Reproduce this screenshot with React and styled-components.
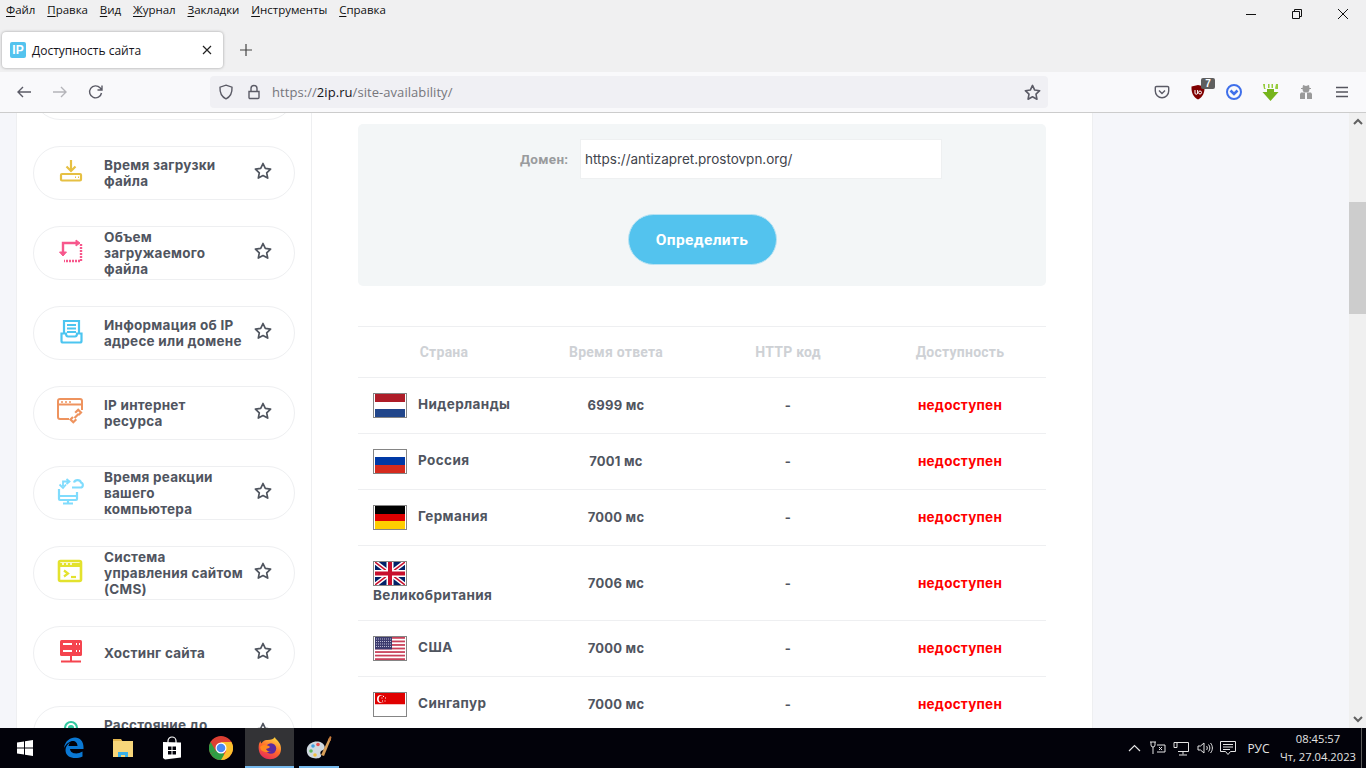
import React from 'react'
import styled, { createGlobalStyle } from 'styled-components'

const GlobalStyle = createGlobalStyle`
  html, body { margin: 0; padding: 0; height: 100%; overflow: hidden; background: #fff; }
  * { box-sizing: border-box; }
`

const Screen = styled.div`
  width: 1366px;
  height: 768px;
  display: flex;
  flex-direction: column;
  overflow: hidden;
  font-family: "Open Sans", "Liberation Sans", sans-serif;
`

/* browser chrome */
const TitleArea = styled.div`
  height: 72px;
  background: #f0f0f1;
  display: flex;
  flex-direction: column;
  position: relative;
`
const MenuBar = styled.div`
  height: 32px;
  display: flex;
  gap: 11.8px;
  padding: 1px 0 0 6px;
  font-size: 11.5px;
  line-height: 17px;
  color: #111;
`
const MenuItem = styled.span`
  & > u { text-underline-offset: 2px; }
`
const WindowButtons = styled.div`
  position: absolute;
  top: 0;
  right: 0;
  display: flex;
`
const WindowButton = styled.div`
  width: 46px;
  height: 28px;
  display: flex;
  align-items: center;
  justify-content: center;
`
const TabRow = styled.div`
  display: flex;
  align-items: center;
  padding-left: 2px;
  height: 36px;
`
const Tab = styled.div`
  width: 221px;
  height: 36px;
  background: #fff;
  border-radius: 4px;
  box-shadow: 0 0 3px rgba(0, 0, 0, 0.35);
  display: flex;
  align-items: center;
  padding: 0 11px 0 8px;
  font-size: 12px;
  color: #15141a;
`
const Favicon = styled.span`
  width: 16px;
  height: 16px;
  border-radius: 2px;
  background: #53c3ee;
  color: #fff;
  font: 700 12px/16px "Liberation Sans", sans-serif;
  text-align: center;
  margin-right: 6px;
`
const TabTitle = styled.span`
  flex: 1;
  padding-top: 1px;
`
const NewTab = styled.div`
  width: 46px;
  display: flex;
  justify-content: center;
`
const NavBar = styled.div`
  height: 41px;
  background: #f9f9fb;
  border-bottom: 1px solid #ccc;
  display: flex;
  align-items: center;
`
const NavButton = styled.div`
  width: 36px;
  height: 32px;
  display: flex;
  align-items: center;
  justify-content: center;
`
const NavLeft = styled.div`
  width: 210px;
  display: flex;
  padding-left: 6px;
`
const UrlBar = styled.div`
  width: 838px;
  height: 32px;
  background: #f0f0f4;
  border-radius: 4px;
  display: flex;
  align-items: center;
  padding: 0 2px;
`
const UrlIcon = styled.div`
  width: 28px;
  display: flex;
  justify-content: center;
`
const UrlText = styled.div`
  flex: 1;
  margin-left: 4px;
  font-size: 13px;
  letter-spacing: 0.06px;
  color: #76767c;
  & > b { font-weight: 400; color: #15141a; }
`
const NavRight = styled.div`
  flex: 1;
  display: flex;
  justify-content: flex-end;
  padding-right: 6px;
`
const Badge = styled.span`
  position: absolute;
  top: 2px;
  right: 1px;
  width: 14px;
  height: 11px;
  background: #5f5f5f;
  border-radius: 2px;
  color: #fff;
  font: 700 10px/11px "Liberation Sans", sans-serif;
  text-align: center;
`
const BadgeHolder = styled(NavButton)`
  position: relative;
`

/* page */
const Viewport = styled.div`
  height: 615px;
  display: flex;
  overflow: hidden;
`
const Page = styled.div`
  flex: 1;
  background: #f5f6fa;
  padding-left: 16px;
  overflow: hidden;
`
const Panel = styled.div`
  width: 1077px;
  height: 100%;
  background: #fff;
  border-left: 1px solid #eeeff1;
  border-right: 1px solid #eeeff1;
  display: flex;
`
const Sidebar = styled.nav`
  width: 295px;
  border-right: 1px solid #eeeff1;
  padding: 0 16px;
`
const CardList = styled.div`
  margin-top: -47px;
  display: flex;
  flex-direction: column;
  gap: 26px;
`
const SideCard = styled.a`
  flex: none;
  height: 54px;
  width: 262px;
  border: 1px solid #eeeff1;
  border-radius: 27px;
  display: flex;
  align-items: center;
  padding-left: 22px;
`
const SideIcon = styled.div`
  width: 28px;
  height: 28px;
  margin-right: 20px;
  margin-bottom: 4px;
  flex: none;
`
const SideLabel = styled.div`
  width: 141px;
  flex: none;
  font: 700 13.5px/16px Inter, "Liberation Sans", sans-serif;
  letter-spacing: 0.25px;
  color: #50555f;
  white-space: pre-line;
`
const SideStar = styled.div`
  width: 18px;
  height: 18px;
  margin-left: 9px;
  margin-bottom: 5px;
  flex: none;
`
const Content = styled.main`
  width: 780px;
  padding: 11px 46px 0;
`
const FormBox = styled.section`
  height: 162px;
  background: #f3f6f7;
  border-radius: 5px;
  display: flex;
  flex-direction: column;
  align-items: center;
  padding-top: 15px;
`
const FieldRow = styled.div`
  display: flex;
  align-items: center;
  margin-left: 58px;
`
const FieldLabel = styled.label`
  width: 60px;
  font: 700 13.5px/20px Roboto, sans-serif;
  letter-spacing: 0.3px;
  color: #999b9d;
`
const DomainInput = styled.div`
  width: 362px;
  height: 40px;
  background: #fff;
  border: 1px solid #eef0f1;
  padding: 0 4px;
  font: 400 13.5px/38px Inter, sans-serif;
  color: #3f444c;
`
const SubmitButton = styled.button`
  margin-top: 35px;
  width: 149px;
  height: 51px;
  border-radius: 26px;
  border: 1px solid #b9e3f3;
  background: #53c3ee;
  color: #fff;
  font: 700 15.5px Roboto, sans-serif;
  letter-spacing: 0.35px;
`
const Results = styled.div`
  margin-top: 40px;
  border-top: 1px solid #eeeff1;
`
const Row = styled.div`
  display: grid;
  grid-template-columns: repeat(4, 172px);
  align-items: center;
  border-bottom: 1px solid #eeeff1;
`
const HeadRow = styled(Row)`
  height: 51px;
`
const HeadCell = styled.div`
  text-align: center;
  font: 700 14px Roboto, sans-serif;
  letter-spacing: 0.25px;
  color: #ced1d5;
`
const CountryCell = styled.div`
  padding: 15px;
  font: 700 13.5px/19px Inter, sans-serif;
  letter-spacing: 0.4px;
  color: #50555f;
`
const FlagFrame = styled.span`
  display: inline-block;
  vertical-align: middle;
  width: 34px;
  height: 25px;
  border: 1px solid #858585;
  padding: 0 1px;
  margin-right: 11px;
  background: #fff;
  & > svg { display: block; }
`
const ValueCell = styled.div`
  text-align: center;
  font: 700 ${({ $red }) => ($red ? '13.5px' : '13px')}/19px Inter, sans-serif;
  letter-spacing: 0.25px;
  color: ${({ $red }) => ($red ? '#ff0000' : '#50555f')};
`

/* scrollbar */
const ScrollBar = styled.div`
  width: 17px;
  background: #f0f0f0;
  display: flex;
  flex-direction: column;
`
const ScrollArrow = styled.div`
  height: 17px;
  display: flex;
  align-items: center;
  justify-content: center;
  ${({ $down }) => $down && 'margin-top: auto;'}
`
const ScrollThumb = styled.div`
  height: 112px;
  margin-top: 72px;
  background: #cdcdcd;
`

/* taskbar */
const Taskbar = styled.footer`
  height: 40px;
  background: #02020a;
  display: flex;
  align-items: stretch;
  color: #e4e4e4;
`
const TaskButton = styled.div`
  width: 49px;
  display: flex;
  align-items: center;
  justify-content: center;
  position: relative;
  background: ${({ $active }) => ($active ? '#333336' : 'transparent')};
  &::after {
    content: '';
    display: ${({ $running }) => ($running ? 'block' : 'none')};
    position: absolute;
    bottom: 0;
    left: ${({ $active }) => ($active ? '0' : '5px')};
    right: ${({ $active }) => ($active ? '0' : '4px')};
    height: 2px;
    background: #76b9ed;
  }
`
const Tray = styled.div`
  margin-left: auto;
  display: flex;
  align-items: center;
  font-size: 12px;
`
const TrayIcon = styled.div`
  width: 23.5px;
  display: flex;
  justify-content: center;
`
const Lang = styled.div`
  width: 37px;
  text-align: center;
`
const Clock = styled.div`
  width: 82px;
  text-align: center;
  font-size: 11.2px;
  line-height: 18px;
  margin-right: 2px;
`
const ShowDesktop = styled.div`
  width: 5px;
  height: 100%;
  border-left: 1px solid #5a5a5a;
`

/* icons */
const G = '#5b5b66'
const StrokeSvg = ({ size = 16, color = G, w = 1.4, children }) => (
  <svg width={size} height={size} viewBox={`0 0 ${size} ${size}`} fill="none" stroke={color} strokeWidth={w}>
    {children}
  </svg>
)

const sideIcons = {
  download: (
    <svg width="28" height="28" viewBox="0 0 28 28" fill="none" stroke="#e6c043" strokeWidth="2.2">
      <path d="M15 3v11M10.500 9.500l4.500 4.500 4.500-4.500" />
      <rect x="5" y="17" width="20" height="6.500" rx="1" />
      <path d="M19 20.200h1M22 20.200h1" strokeWidth="1.500" />
    </svg>
  ),
  resize: (
    <svg width="28" height="28" viewBox="0 0 28 28" fill="none" stroke="#f7578c" strokeWidth="2.4">
      <path d="M7 17V6h15" />
      <path d="M3.500 15L7 19l3.500-4z M20 3l4 3-4 3z" fill="#f7578c" strokeWidth="1" />
      <path d="M25 7v17H8" strokeDasharray="2 1" strokeWidth="2.400" />
    </svg>
  ),
  info: (
    <svg width="28" height="28" viewBox="0 0 28 28" fill="none" stroke="#4cc5f0" strokeWidth="2.2">
      <path d="M8 17V4h15v13" />
      <path d="M11 8h9M11 11.500h9M11 15h9" strokeWidth="1.800" />
      <path d="M5.500 16.500h4.500c0 2 1 3 2 3h7c1 0 2-1 2-3h4.500V24a1.500 1.500 0 0 1-1.500 1.500H7A1.500 1.500 0 0 1 5.500 24z" />
    </svg>
  ),
  link: (
    <svg width="28" height="28" viewBox="0 0 28 28" fill="none" stroke="#ee935e" strokeWidth="2">
      <path d="M13 22H4a2 2 0 0 1-2-2V4a2 2 0 0 1 2-2h20a2 2 0 0 1 2 2v9" />
      <path d="M2 7.500h24" />
      <path d="M5 5h2M9 5h2M13 5h2" strokeWidth="1.600" />
      <path d="M17 20l-2.500 2.500 2.800 2.800 3-3M22.500 18l2.500-2.500-2.800-2.800-3 3M18.500 21l4-4" strokeWidth="2.200" />
    </svg>
  ),
  cloud: (
    <svg width="28" height="28" viewBox="0 0 28 28" fill="none" stroke="#80dcfd" strokeWidth="2.200">
      <path d="M18 5.500c1-3 6-3.500 7 0 2.500.5 2.500 5-.5 5H16" />
      <path d="M3 12v10a1 1 0 0 0 1 1h16a1 1 0 0 0 1-1v-7" />
      <path d="M3 19h18M12 23v3M7 26.500h10" />
      <path d="M7 9V4.500h5M10.500 2l3 2.500-3 2.500M3.500 7.500L7 11l3-3.500" strokeWidth="1.800" />
    </svg>
  ),
  terminal: (
    <svg width="28" height="28" viewBox="0 0 28 28" fill="none" stroke="#e3e22e" strokeWidth="2.600">
      <rect x="3" y="4" width="22" height="20" rx="1.500" />
      <path d="M3 8h22" strokeWidth="4" />
      <path d="M6 7h2M10 7h2M14 7h2" stroke="#fff" strokeWidth="1.500" />
      <path d="M8 13.500l4 3-4 3" strokeWidth="2.200" />
      <path d="M15 20h5" strokeWidth="2.200" />
    </svg>
  ),
  server: (
    <svg width="28" height="28" viewBox="0 0 28 28" fill="none">
      <rect x="4" y="3" width="22" height="16" rx="1.500" fill="#f5444f" />
      <path d="M7 7h9M7 14h9M20 7h1M23 7h1M20 14h1M23 14h1" stroke="#fff" strokeWidth="2" />
      <path d="M15 19v5M5 24.500h20" stroke="#f5444f" strokeWidth="2" />
    </svg>
  ),
  pin: (
    <svg width="28" height="28" viewBox="0 0 28 28" fill="none" stroke="#32c9a0" strokeWidth="2.200">
      <circle cx="15" cy="11" r="6" />
      <circle cx="15" cy="11" r="2" fill="#32c9a0" />
    </svg>
  ),
}

const Star = ({ color = '#50555f', size = 18 }) => (
  <svg width={size} height={size} viewBox="0 0 18 18" fill="none" stroke={color} strokeWidth="1.700" strokeLinejoin="round">
    <path d="M9 1.500l2.300 4.900 5.300.7-3.900 3.700 1 5.300L9 13.500l-4.700 2.600 1-5.300L1.400 7.100l5.300-.7z" />
  </svg>
)

const flags = {
  nl: (
    <svg width="30" height="23" viewBox="0 0 30 23">
      <rect width="30" height="8" fill="#ae1c28" />
      <rect y="8" width="30" height="7" fill="#fff" />
      <rect y="15" width="30" height="8" fill="#21468b" />
    </svg>
  ),
  ru: (
    <svg width="30" height="23" viewBox="0 0 30 23">
      <rect width="30" height="7" fill="#fff" />
      <rect y="7" width="30" height="8" fill="#0039a6" />
      <rect y="15" width="30" height="8" fill="#d52b1e" />
    </svg>
  ),
  de: (
    <svg width="30" height="23" viewBox="0 0 30 23">
      <rect width="30" height="8" fill="#000" />
      <rect y="8" width="30" height="7" fill="#dd0000" />
      <rect y="15" width="30" height="8" fill="#ffce00" />
    </svg>
  ),
  gb: (
    <svg width="30" height="23" viewBox="0 0 30 23">
      <rect width="30" height="23" fill="#012169" />
      <path d="M0 0l30 23M30 0L0 23" stroke="#fff" strokeWidth="4.500" />
      <path d="M0 0l30 23M30 0L0 23" stroke="#c8102e" strokeWidth="1.500" />
      <path d="M15 0v23M0 11.500h30" stroke="#fff" strokeWidth="7" />
      <path d="M15 0v23M0 11.500h30" stroke="#c8102e" strokeWidth="4" />
    </svg>
  ),
  us: (
    <svg width="30" height="23" viewBox="0 0 30 23">
      <rect width="30" height="23" fill="#fff" />
      {[0, 2, 4, 6, 8, 10, 12].map((i) => (
        <rect key={i} y={i * 1.77} width="30" height="1.770" fill="#c9415a" />
      ))}
      <rect width="17" height="12.400" fill="#3c3b6e" />
      <path d="M1 2h15M1 4.500h15M1 7h15M1 9.500h15" stroke="#b9bad0" strokeWidth="1" strokeDasharray="1 1" />
    </svg>
  ),
  sg: (
    <svg width="30" height="23" viewBox="0 0 30 23">
      <rect width="30" height="11.500" fill="#e00000" />
      <rect y="11.500" width="30" height="11.500" fill="#fff" />
      <circle cx="6" cy="6" r="4" fill="#fff" />
      <circle cx="7.500" cy="6" r="3.800" fill="#e00000" />
      <path d="M8 3.500h1M6.500 5h1M10 5h1M7 8h1M9.500 8h1" stroke="#fff" strokeWidth="1" />
    </svg>
  ),
}

const cards = [
  { label: 'Время загрузки файла', icon: 'download' },
  { label: 'Объем загружаемого файла', icon: 'resize' },
  { label: 'Информация об IP адресе или домене', icon: 'info' },
  { label: 'IP интернет ресурса', icon: 'link' },
  { label: 'Время реакции вашего компьютера', icon: 'cloud' },
  { label: 'Система управления сайтом (CMS)', icon: 'terminal' },
  { label: 'Хостинг сайта', icon: 'server' },
  { label: 'Расстояние до\nсайта', icon: 'pin' },
]

const results = [
  { flag: 'nl', name: 'Нидерланды', time: '6999 мс' },
  { flag: 'ru', name: 'Россия', time: '7001 мс' },
  { flag: 'de', name: 'Германия', time: '7000 мс' },
  { flag: 'gb', name: 'Великобритания', time: '7006 мс' },
  { flag: 'us', name: 'США', time: '7000 мс' },
  { flag: 'sg', name: 'Сингапур', time: '7000 мс' },
]

const menu = [
  ['Ф', 'айл'],
  ['П', 'равка'],
  ['В', 'ид'],
  ['Ж', 'урнал'],
  ['З', 'акладки'],
  ['И', 'нструменты'],
  ['С', 'правка'],
]

function BrowserChrome() {
  return (
    <>
      <TitleArea>
        <MenuBar>
          {menu.map(([first, rest]) => (
            <MenuItem key={first + rest}>
              <u>{first}</u>
              {rest}
            </MenuItem>
          ))}
        </MenuBar>
        <WindowButtons>
          <WindowButton>
            <svg width="10" height="10" stroke="#111"><path d="M0 5.500h10" /></svg>
          </WindowButton>
          <WindowButton>
            <svg width="10" height="10" fill="none" stroke="#111"><path d="M.5 2.500h7v7h-7zM2.500 2.500v-2h7v7h-2" /></svg>
          </WindowButton>
          <WindowButton>
            <svg width="10" height="10" stroke="#111"><path d="M0 0l10 10M10 0L0 10" /></svg>
          </WindowButton>
        </WindowButtons>
        <TabRow>
          <Tab>
            <Favicon>IP</Favicon>
            <TabTitle>Доступность сайта</TabTitle>
            <svg width="10" height="10" stroke="#222" strokeWidth="1.200"><path d="M1 1l8 8M9 1L1 9" /></svg>
          </Tab>
          <NewTab>
            <svg width="12" height="12" stroke="#444" strokeWidth="1.200"><path d="M6 0v12M0 6h12" /></svg>
          </NewTab>
        </TabRow>
      </TitleArea>
      <NavBar>
        <NavLeft>
          <NavButton>
            <StrokeSvg><path d="M15 8H2M7 3L2 8l5 5" /></StrokeSvg>
          </NavButton>
          <NavButton>
            <StrokeSvg color="#b4b4b9"><path d="M1 8h13M9 3l5 5-5 5" /></StrokeSvg>
          </NavButton>
          <NavButton>
            <StrokeSvg><path d="M13.500 9a6 6 0 1 1-1.500-5.200L14 6M14 1.500V6H9.500" /></StrokeSvg>
          </NavButton>
        </NavLeft>
        <UrlBar>
          <UrlIcon>
            <StrokeSvg><path d="M8 1.200l6 2c.3 5.500-1.500 9.500-6 11.600-4.500-2.100-6.300-6.100-6-11.600z" /></StrokeSvg>
          </UrlIcon>
          <UrlIcon>
            <StrokeSvg><path d="M3 7.500h10v6a1 1 0 0 1-1 1H4a1 1 0 0 1-1-1zM5 7.500V4.500a3 3 0 0 1 6 0v3" /></StrokeSvg>
          </UrlIcon>
          <UrlText>https://<b>2ip.ru</b>/site-availability/</UrlText>
          <UrlIcon>
            <Star color={G} size={17} />
          </UrlIcon>
        </UrlBar>
        <NavRight>
          <NavButton>
            <StrokeSvg>
              <path d="M2.500 2.500h11A1.200 1.200 0 0 1 14.700 3.700V7a6.700 6.700 0 0 1-13.400 0V3.700A1.200 1.200 0 0 1 2.500 2.500z" />
              <path d="M5 6.500l3 3 3-3" />
            </StrokeSvg>
          </NavButton>
          <BadgeHolder>
            <svg width="16" height="16" viewBox="0 0 16 16">
              <path d="M8 1l6.500 1.500c.3 6-1.500 10.500-6.500 13C3 13 1.200 8.500 1.500 2.500z" fill="#800000" />
              <path d="M5 6v3a1.300 1.300 0 0 0 2.600 0V6" stroke="#fff" fill="none" />
              <circle cx="10" cy="8.500" r="1.500" stroke="#fff" fill="none" />
            </svg>
            <Badge>7</Badge>
          </BadgeHolder>
          <NavButton>
            <svg width="16" height="16" viewBox="0 0 16 16" fill="none" stroke="#3f6fea">
              <circle cx="8" cy="8" r="7" strokeWidth="2" />
              <path d="M4.500 6.500L8 10l3.500-3.500" strokeWidth="2.600" />
            </svg>
          </NavButton>
          <NavButton>
            <svg width="17" height="17" viewBox="0 0 17 17">
              <path d="M5 5h7v3h4.500l-8 9-8-9H5z" fill="#76b41c" />
              <path d="M1 0h2v4l1 1H2zM14 0h2v5h-2l-1-.5zM6 0h1.500v4H6zM9.500 0H11v4H9.500z" fill="#96cc3c" />
            </svg>
          </NavButton>
          <NavButton>
            <svg width="16" height="16" viewBox="0 0 16 16" fill="#9a9a9a">
              <path d="M5 1l3 1 3-1 .5 3H13v1h-1.500a3.500 3.500 0 0 1-7 0H3V4h1.500z" />
              <path d="M2 10l1-1.500h4V15H2zM14 10l-1-1.500H9V15h5z" />
            </svg>
          </NavButton>
          <NavButton>
            <svg width="14" height="12" stroke="#55555e" strokeWidth="1.300"><path d="M1 1.500h12M1 6h12M1 10.500h12" /></svg>
          </NavButton>
        </NavRight>
      </NavBar>
    </>
  )
}

function SitePage() {
  return (
    <Viewport>
      <Page>
        <Panel>
          <Sidebar>
            <CardList>
              <SideCard />
              {cards.map((card) => (
                <SideCard key={card.label}>
                  <SideIcon>{sideIcons[card.icon]}</SideIcon>
                  <SideLabel>{card.label}</SideLabel>
                  <SideStar><Star /></SideStar>
                </SideCard>
              ))}
            </CardList>
          </Sidebar>
          <Content>
            <FormBox>
              <FieldRow>
                <FieldLabel>Домен:</FieldLabel>
                <DomainInput>https://antizapret.prostovpn.org/</DomainInput>
              </FieldRow>
              <SubmitButton>Определить</SubmitButton>
            </FormBox>
            <Results>
              <HeadRow>
                <HeadCell>Страна</HeadCell>
                <HeadCell>Время ответа</HeadCell>
                <HeadCell>HTTP код</HeadCell>
                <HeadCell>Доступность</HeadCell>
              </HeadRow>
              {results.map((row) => (
                <Row key={row.flag}>
                  <CountryCell>
                    <FlagFrame>{flags[row.flag]}</FlagFrame>
                    <span>{row.name}</span>
                  </CountryCell>
                  <ValueCell>{row.time}</ValueCell>
                  <ValueCell>-</ValueCell>
                  <ValueCell $red>недоступен</ValueCell>
                </Row>
              ))}
            </Results>
          </Content>
        </Panel>
      </Page>
      <ScrollBar>
        <ScrollArrow>
          <svg width="10" height="7" fill="none" stroke="#606060" strokeWidth="2"><path d="M1 6l4-4 4 4" /></svg>
        </ScrollArrow>
        <ScrollThumb />
        <ScrollArrow $down>
          <svg width="10" height="7" fill="none" stroke="#606060" strokeWidth="2"><path d="M1 1l4 4 4-4" /></svg>
        </ScrollArrow>
      </ScrollBar>
    </Viewport>
  )
}

function BottomBar() {
  return (
    <Taskbar>
      <TaskButton>
        <svg width="16" height="16" viewBox="0 0 16 16" fill="#fff">
          <path d="M0 2.500l7-1v6H0zM8 1.300L16 0v7.500H8zM0 8.500h7v6l-7-1zM8 8.500h8V16l-8-1.200z" />
        </svg>
      </TaskButton>
      <TaskButton>
        <svg width="21" height="22" viewBox="0 0 21 22" fill="none">
          <path d="M1 11C2 4 7 .5 12 .5c5 0 8.500 4 8.500 9.500v2H7c.3 4.500 7 6 12.500 2.500v5C13 22.500 2.500 21.500 2.500 13c0-3 2-6 4.500-7.500C5.500 8 5.500 9 5.500 9h9c0-6-8-8-13.500 2z" fill="#0a78d4" />
        </svg>
      </TaskButton>
      <TaskButton>
        <svg width="22" height="20" viewBox="0 0 22 20">
          <path d="M1 1h8l2 3H1z" fill="#e2b54e" />
          <rect x="1" y="3" width="20" height="16" fill="#f7d67a" />
          <path d="M6 19v-5h10v5h-3v-2H9v2z" fill="#3ab0e8" />
        </svg>
      </TaskButton>
      <TaskButton>
        <svg width="20" height="24" viewBox="0 0 20 24" fill="#fff">
          <path d="M6 7V5a4 4 0 0 1 8 0v2" fill="none" stroke="#fff" strokeWidth="1.200" />
          <path d="M1 6l18 .5v15L3 23.500 1 22z" />
          <path d="M6 10.500h3.500V14H6zM10.500 10.500H14V14h-3.500zM6 15h3.500v3.500H6zM10.500 15H14v3.500h-3.500z" fill="#02020a" />
        </svg>
      </TaskButton>
      <TaskButton>
        <svg width="24" height="24" viewBox="0 0 24 24">
          <circle cx="12" cy="12" r="12" fill="#dd3f33" />
          <path d="M12 12L1.600 18A12 12 0 0 0 12 24c2 0 3.500-.5 5-1.200z" fill="#2f9e44" />
          <path d="M12 6h10.400A12 12 0 0 1 12 24l5.200-9z" fill="#fbc02d" />
          <path d="M1.600 6A12 12 0 0 0 1.600 18L6.800 15z" fill="#2f9e44" />
          <circle cx="12" cy="12" r="5.500" fill="#fff" />
          <circle cx="12" cy="12" r="4.300" fill="#4a8af4" />
        </svg>
      </TaskButton>
      <TaskButton $active $running>
        <svg width="24" height="24" viewBox="0 0 24 24">
          <defs>
            <linearGradient id="fx" x1="0.700" y1="0" x2="0.200" y2="1">
              <stop offset="0" stopColor="#ffd53d" />
              <stop offset="0.500" stopColor="#ff6a2b" />
              <stop offset="1" stopColor="#e3245f" />
            </linearGradient>
          </defs>
          <path d="M17 1c0 2 3 3 5 7 2 5 1 10-3 13-4 3-10 3-14 0C1 18 0 13 1 8c.5-1.500 1-2.500 1.500-3 0 1 .5 2 1 2.500C5 5 7 3.500 9.500 4 13 4 16 3 17 1z" fill="url(#fx)" />
          <circle cx="13" cy="12.500" r="5.200" fill="#5b2a9e" />
          <path d="M2 11c3-3 6-2 9-1 1 .5 1 1.500 0 2l-3 1c1 2 3 3 5 2-3 2-8 1-10-1z" fill="#ff8a1f" />
        </svg>
      </TaskButton>
      <TaskButton $running>
        <svg width="26" height="25" viewBox="0 0 26 25">
          <path d="M1 12c2-6 10-8 15-5 3 2 4 6 1 7-3 1-3 3-2 5 1 3-4 4-8 3-5-1-7-5-6-10z" fill="#cfd8e0" />
          <circle cx="7" cy="10" r="1.800" fill="#3f9fe0" />
          <circle cx="12" cy="8.500" r="1.800" fill="#e84f4f" />
          <circle cx="5" cy="15" r="1.800" fill="#5cb85c" />
          <circle cx="9" cy="19" r="1.800" fill="#f0c040" />
          <path d="M15 19L23 2l2 1-7 17z" fill="#d9a05a" />
          <path d="M22 4l2-4 1.500 1-1 4z" fill="#c87c3c" />
        </svg>
      </TaskButton>
      <Tray>
        <TrayIcon>
          <svg width="13" height="8" fill="none" stroke="#e4e4e4" strokeWidth="1.200"><path d="M1 7l5.500-5.500L12 7" /></svg>
        </TrayIcon>
        <TrayIcon>
          <svg width="16" height="14" viewBox="0 0 16 14" fill="none" stroke="#e4e4e4">
            <path d="M1 1v3a2 2 0 0 0 4 0V1M3 6v7M0 1h6M7 4h8v7H7M9 6l3 3M12 6L9 9" />
          </svg>
        </TrayIcon>
        <TrayIcon>
          <svg width="16" height="15" viewBox="0 0 16 15" fill="none" stroke="#e4e4e4">
            <path d="M4 1.500h11.500v9H5M1 1.500v5h3v-5zM1 1.500h3M10 10.500v3M6 14h8" />
          </svg>
        </TrayIcon>
        <TrayIcon>
          <svg width="16" height="14" viewBox="0 0 16 14" fill="none" stroke="#e4e4e4">
            <path d="M1 5v4h2.500L7 12V2L3.500 5zM9.500 5c1 1 1 3 0 4M11.500 3.500c1.800 2 1.800 5 0 7M13.500 2c2.500 3 2.500 7 0 10" />
          </svg>
        </TrayIcon>
        <TrayIcon>
          <svg width="16" height="16" viewBox="0 0 16 16" fill="none" stroke="#e4e4e4">
            <path d="M.5 1.500h15v10h-5L8 14.500l-2.500-3h-5zM3 4.500h10M3 7h10M3 9.500h7" />
          </svg>
        </TrayIcon>
        <Lang>РУС</Lang>
        <Clock>
          08:45:57
          <br />
          Чт, 27.04.2023
        </Clock>
        <ShowDesktop />
      </Tray>
    </Taskbar>
  )
}

export default function App() {
  return (
    <Screen>
      <GlobalStyle />
      <BrowserChrome />
      <SitePage />
      <BottomBar />
    </Screen>
  )
}
